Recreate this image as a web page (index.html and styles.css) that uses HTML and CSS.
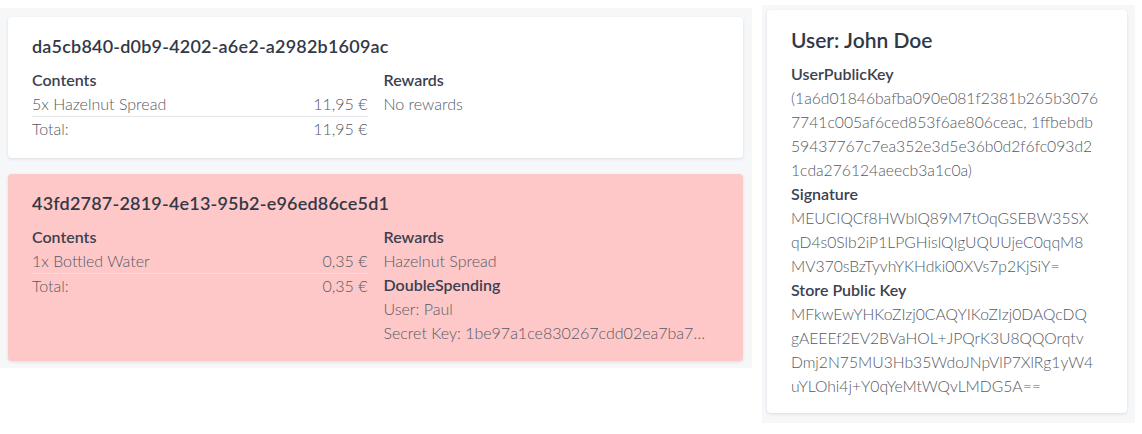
FILE: index.html
```html
<!DOCTYPE html>
<html>
<head>
<meta charset="utf-8">
<link rel="stylesheet" href="styles.css">
</head>
<body>
<div class="page">
  <section class="orders">
    <article class="card">
      <h2 class="card-title">da5cb840-d0b9-4202-a6e2-a2982b1609ac</h2>
      <div class="cols">
        <div class="col">
          <div class="label">Contents</div>
          <div class="row item"><span>5x Hazelnut Spread</span><span>11,95 €</span></div>
          <div class="row"><span>Total:</span><span>11,95 €</span></div>
        </div>
        <div class="col">
          <div class="label">Rewards</div>
          <div class="text">No rewards</div>
        </div>
      </div>
    </article>
    <article class="card card-alert">
      <h2 class="card-title">43fd2787-2819-4e13-95b2-e96ed86ce5d1</h2>
      <div class="cols">
        <div class="col">
          <div class="label">Contents</div>
          <div class="row item"><span>1x Bottled Water</span><span>0,35 €</span></div>
          <div class="row"><span>Total:</span><span>0,35 €</span></div>
        </div>
        <div class="col">
          <div class="label">Rewards</div>
          <div class="text">Hazelnut Spread</div>
          <div class="label">DoubleSpending</div>
          <div class="text">User: Paul</div>
          <div class="text">Secret Key: 1be97a1ce830267cdd02ea7ba7…</div>
        </div>
      </div>
    </article>
  </section>
  <aside class="user-panel">
    <article class="card user-card">
      <h2 class="user-title">User: John Doe</h2>
      <div class="label">UserPublicKey</div>
      <div class="text key">(1a6d01846bafba090e081f2381b265b3076<br>7741c005af6ced853f6ae806ceac, 1ffbebdb<br>59437767c7ea352e3d5e36b0d2f6fc093d2<br>1cda276124aeecb3a1c0a)</div>
      <div class="label">Signature</div>
      <div class="text key">MEUCIQCf8HWblQ89M7tOqGSEBW35SX<br>qD4s0Slb2iP1LPGHislQIgUQUUjeC0qqM8<br>MV370sBzTyvhYKHdki00XVs7p2KjSiY=</div>
      <div class="label">Store Public Key</div>
      <div class="text key">MFkwEwYHKoZIzj0CAQYIKoZIzj0DAQcDQ<br>gAEEEf2EV2BVaHOL+JPQrK3U8QQOrqtv<br>Dmj2N75MU3Hb35WdoJNpVlP7XlRg1yW4<br>uYLOhi4j+Y0qYeMtWQvLMDG5A==</div>
    </article>
  </aside>
</div>
</body>
</html>
```
FILE: styles.css
```css
* { box-sizing: border-box; }
html, body { margin: 0; padding: 0; background: #ffffff; }
body {
  font-family: Lato, "Open Sans", sans-serif;
  color: #3a3f4d;
  font-size: 16px;
  line-height: 24px;
}
.page {
  display: flex;
  align-items: flex-start;
  gap: 10px;
}
.orders {
  margin-top: 8px;
  width: 752px;
  background: #f6f7f9;
  padding: 9px 9px 7px 8px;
  display: flex;
  flex-direction: column;
  gap: 16px;
}
.card {
  background: #ffffff;
  border-radius: 4px;
  box-shadow: 0 1px 3px rgba(30, 40, 60, 0.12);
  padding: 17px 24px 17px;
}
.card-alert {
  background: #ffc8c8;
  padding-bottom: 16px;
}
.card-title {
  margin: 0 0 10px;
  font-size: 18px;
  letter-spacing: 0.2px;
  line-height: 24px;
  font-weight: 600;
  color: #323846;
}
.cols {
  display: grid;
  grid-template-columns: 1fr 1fr;
  gap: 16px;
}
.col { min-width: 0; }
.label {
  font-weight: 600;
  color: #3c4150;
}
.text, .row {
  color: #565a64;
  font-weight: 300;
}
.row {
  display: flex;
  justify-content: space-between;
}
.item { border-bottom: 1px solid #e4e6ea; }
.card-alert .item { border-bottom-color: #f3dede; }
.key {
  white-space: nowrap;
  font-size: 15.7px;
}
.user-panel {
  margin-top: 5px;
  width: 373px;
  background: #f6f7f9;
  padding: 5px 8px 10px 5px;
}
.user-card {
  padding: 16px 20px 15px 24px;
}
.user-title {
  margin: 0 0 8px;
  font-size: 21px;
  line-height: 28px;
  font-weight: 600;
  color: #323846;
}
```
